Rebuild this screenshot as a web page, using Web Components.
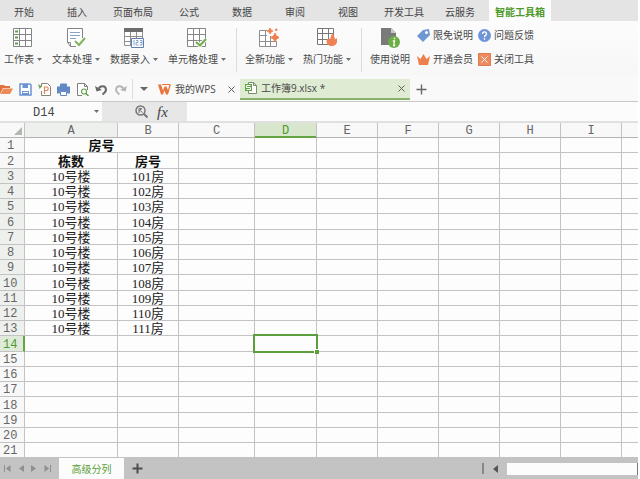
<!DOCTYPE html>
<html lang="zh-CN">
<head>
<meta charset="utf-8">
<title>工作簿9.xlsx</title>
<style>
html, body { margin: 0; height: 100%; background: #fff; }
body { font: 10px/14px "Open Sans", "Noto Sans CJK SC", sans-serif; color: #484848; }
</style>
</head>
<body>
<wps-app></wps-app>
<script>
const RESET = `
*, :host { box-sizing: border-box; }
button { font: inherit; color: inherit; background: none; border: 0; padding: 0; margin: 0; white-space: nowrap; }
input { font: inherit; color: inherit; border: 0; margin: 0; min-width: 0; }
`;

function define(name, css, html) {
  customElements.define(name, class extends HTMLElement {
    constructor() {
      super();
      this.attachShadow({ mode: 'open' }).innerHTML =
        `<style>${RESET}${css}</style>${typeof html === 'function' ? html(this) : html}`;
    }
  });
}

/* Every icon: [width, height, svg content] */
const GRID = '<path d="M.5 .5h18v18H.5z" fill="#fff" stroke="#858585"/>';
const ICONS = {
  sheet: [20, 20, '<path d="M.5 .5h18v18H.5zM6.500 .5v18M12.500 .5v18M.5 6.500h18M.5 12.500h18" fill="#fff" stroke="#858585"/><path d="M2 3.500h3M2 9.500h3M2 15.500h3" stroke="#5da04a" stroke-width="2"/>'],
  text: [20, 20, '<path d="M16.500 10V.5H1.500v14l3 4H10" fill="#fff" stroke="#858585"/><path d="M1.500 14.500h3v4" fill="none" stroke="#858585"/><path d="M4 4.500h10M4 7.500h10M4 10.500h6" stroke="#8ca3c9"/><path d="M9 13l4 4 6-7" fill="none" stroke="#80b55c" stroke-width="2"/>'],
  entry: [20, 20, '<path d="M.5 2.500h18v15H.5zM6.500 4v14M12.500 4v14M.5 8.500h18M.5 13.500h18" fill="#fff" stroke="#8f8f8f"/><path d="M0 0h19v4H0z" fill="#6d6d6d"/><path d="M7.500 10.500h12v9h-12z" fill="#fff" stroke="#5d7db4"/><path d="M9 13.500l1-1v5M12 12.500h2v2h-2v2.500h2.500M16 12.500h2v2h-2M18 14.500v2.500h-2.500" fill="none" stroke="#6f90c8" stroke-width=".8"/>'],
  cells: [20, 20, GRID + '<path d="M6.500 .5v18M12.500 .5v18M.5 6.500h18M.5 12.500h18" stroke="#858585"/><path d="M9 14l4 3.500 6-6.500" fill="none" stroke="#fff" stroke-width="4"/><path d="M9 14l4 3.500 6-6.500" fill="none" stroke="#72ad50" stroke-width="2.200"/>'],
  fresh: [20, 20, '<path d="M.5 2.500h17v16H.5zM6.500 2v16M11.500 2v16M.5 7.500h17M.5 13.500h17" fill="#fff" stroke="#8f8f8f"/><path d="M8 0h12v5h-8v3H8zM12 5h8v8h-5l-3-3z" fill="#fafafa"/><path d="M16 5l1.500 3 3 1.500-3 1.500-1.500 3-1.500-3-3-1.500 3-1.500zM11 0l1 2 2 1-2 1-1 2-1-2-2-1 2-1zM16.500 1H18v1.500h-1.500z" fill="#ef7f4d" stroke="#ef7f4d" stroke-width=".8"/>'],
  hot: [20, 20, '<path d="M.5 .5h16v16H.5zM5.500 .5v16M11.500 .5v16M.5 5.500h16M.5 11.500h16" fill="#fff" stroke="#777"/><path d="M10 11c-1.500 4 1 7 5 7s6.500-4 4.500-8l-1.500 1.500c0-3-2-4-1.500-6-3 1.500-3 4-3 6l-1.500-1.500c0 1-1 1-2 1z" fill="#ef8152"/>'],
  help: [20, 20, '<path d="M1 0h10l5 5v12H1z" fill="#7a7a7a"/><path d="M11 0v5h5z" fill="#c9c9c9"/><circle cx="14" cy="14" r="6" fill="#6aae45"/><path d="M14.500 9.800v1.500M12.800 13h1.700l-.8 4.500h1.500" fill="none" stroke="#fff" stroke-width="1.300"/>'],
  tag: [13, 13, '<path d="M6 1l6-1 1 6-7 7-6-6z" fill="#6f97d3"/><circle cx="9.500" cy="3.500" r="1.500" fill="#fff"/>'],
  crown: [13, 13, '<path d="M0 3l3.500 3L6.500 1l3 5L13 3l-2 9H2z" fill="#ee8050"/>'],
  ask: [13, 13, '<circle cx="6.500" cy="6.500" r="6.500" fill="#6f94d8"/><path d="M4.500 5c0-3 4.200-2.600 4 0-.1 1.500-2 1.300-2 3.200M6.500 9.300v1.500" fill="none" stroke="#fff" stroke-width="1.400"/>'],
  shut: [13, 13, '<path d="M.5 .5h12v12H.5z" fill="#ee8a60" stroke="#dd7a50"/><path d="M3.500 3.500l6 6M9.500 3.500l-6 6" stroke="#fff"/>'],
  folder: [13, 13, '<path d="M0 2h4l1 1h5v2H3L0 11z" fill="#e2733c"/><path d="M3.500 5.500H13L10 11H.5z" fill="#ee8a55"/>'],
  save: [13, 13, '<path d="M1 1h10l1 1v10H1z" fill="#fff" stroke="#6b93d1" stroke-width="1.500"/><path d="M3.500 1h5.500v4H3.500zM3 8h7v4H3z" fill="#6b93d1"/><path d="M4 9.500h5" stroke="#fff"/>'],
  pdf: [13, 13, '<path d="M3.500 4V.5h6l3 3v9h-9V8" fill="#fff" stroke="#8a8276"/><path d="M6.500 11V4h2.200c2 0 2 3.500 0 3.500H6.500" fill="none" stroke="#df875c" stroke-width="1.200"/><path d="M0 1l4 2.500L1.500 6" fill="#72aa52"/>'],
  print: [13, 13, '<path d="M3.500 4V1h6v3M0 4h13v6h-2.500V7.500h-8V10H0z" fill="#6188c5" stroke="#6188c5"/><path d="M3.500 8.500h6v4h-6z" fill="#fff" stroke="#6188c5"/>'],
  preview: [13, 13, '<path d="M6 12.500H1.500V.5h7l3 3V7M8.500 .5v3h3" fill="#fff" stroke="#808080"/><circle cx="8" cy="8.500" r="2.500" fill="#fff" stroke="#62a24a" stroke-width="1.200"/><path d="M10 10.500l2.500 2.500" stroke="#62a24a" stroke-width="1.500"/>'],
  undo: [13, 13, '<path d="M3.500 6C5 2.500 10.500 2 11 6.500c0 2-1.500 3.500-3.500 5" fill="none" stroke="#686868" stroke-width="2"/><path d="M0 3l1.500 5.500L7 7z" fill="#686868"/>'],
  redo: [13, 13, '<path d="M9.500 6C8 2.500 2.500 2 2 6.500c0 2 1.500 3.500 3.500 5" fill="none" stroke="#b4b4b4" stroke-width="1.800"/><path d="M13 3l-1.500 5.500L6 7z" fill="#b4b4b4"/>'],
  caret: [8, 4, '<path d="M0 0h8L4 4z" fill="#666"/>'],
  mini: [5, 3, '<path d="M0 0h5L2.500 3z" fill="#707070"/>'],
  wps: [13, 11, '<path d="M0 .5h3l2 6 1.500-4h2L10 6l1.500-5.500H13L10 10.500H8L6.500 6.500 5 10.500H3z" fill="#e9763c"/><path d="M4 .5h8" stroke="#e9763c"/>'],
  close: [7, 7, '<path d="M.5 .5l6 6M6.500 .5l-6 6" stroke="#5c5c5c"/>'],
  book: [12, 12, '<path d="M3.500 .5h5l3 3v8h-8zM8.500 .5v3h3" fill="#fff" stroke="#7c8f72"/><path d="M0 2h7v7H0z" fill="#62a247"/><path d="M5.500 3.500h-4v2h4v2h-4" fill="none" stroke="#fff"/>'],
  plus: [11, 11, '<path d="M5.500 .5v10M.5 5.500h10" stroke="#666" stroke-width="1.400"/>'],
  add: [11, 11, '<path d="M5.500 .5v10M.5 5.500h10" stroke="#4d4d4d" stroke-width="2"/>'],
  find: [13, 13, '<circle cx="5.500" cy="5.500" r="4.500" fill="none" stroke="#777" stroke-width="1.500"/><path d="M8.500 8.500l4 4" stroke="#777" stroke-width="2"/><path d="M4 8V3.500h3L4 5.500h1l2.500 2" fill="none" stroke="#777"/>'],
  corner: [8, 8, '<path d="M8 0v8H0z" fill="#b5b5b5"/>'],
  first: [7, 7, '<path d="M.5 0v7" stroke="#8f8f8f"/><path d="M6.500 0v7L2 3.500z" fill="#8f8f8f"/>'],
  prev: [5, 7, '<path d="M5 0v7L0 3.500z" fill="#8f8f8f"/>'],
  next: [5, 7, '<path d="M0 0v7l5-3.500z" fill="#8f8f8f"/>'],
  last: [7, 7, '<path d="M6.500 0v7" stroke="#8f8f8f"/><path d="M.5 0v7L5 3.500z" fill="#8f8f8f"/>'],
  scroll: [5, 8, '<path d="M5 0v8L0 4z" fill="#555"/>']
};
define('ui-icon', ':host{display:block;flex:none} svg{display:block}', el => {
  const [w, h, body] = ICONS[el.getAttribute('name')];
  return `<svg width="${w}" height="${h}" viewBox="0 0 ${w} ${h}" aria-hidden="true">${body}</svg>`;
});

define('menu-tab', `
:host { display: flex; min-width: 52px; }
button { flex: 1; padding: 2px 9px 0; }
:host([active]) { margin-left: 2px; background: #fcfcfc; }
:host([active]) button { padding: 2px 6px 0; color: #4f9a2c; font-weight: bold; }
`, '<button role="tab"><slot></slot></button>');

define('menu-bar', `
:host { display: flex; height: 21px; gap: 1px; background: #e4e4e4; color: #444; overflow: hidden; }
menu-tab:first-of-type { margin-left: -2px; }
`, ['开始', '插入', '页面布局', '公式', '数据', '审阅', '视图', '开发工具', '云服务'].map(t => `<menu-tab>${t}</menu-tab>`).join('')
  + '<menu-tab active>智能工具箱</menu-tab>');

define('ribbon-tool', `
:host { display: block; }
button { display: flex; flex-direction: column; align-items: center; gap: 4px; }
span { display: flex; align-items: center; gap: 3px; }
`, el => `<button><ui-icon name="${el.getAttribute('icon')}"></ui-icon><span><slot></slot>${el.hasAttribute('plain') ? '' : '<ui-icon name="mini"></ui-icon>'}</span></button>`);

define('ribbon-link', `
:host { display: block; }
button { display: flex; align-items: center; gap: 3px; height: 14px; }
`, el => `<button><ui-icon name="${el.getAttribute('icon')}"></ui-icon><slot></slot></button>`);

define('tool-ribbon', `
:host { display: flex; height: 54px; padding-top: 7px; background: linear-gradient(#fcfcfc, #f7f7f7); }
section { display: flex; gap: 10px; padding: 0 10px 0 8px; height: 44px; border-right: 1px solid #dcdcdc; }
section:first-of-type { padding-left: 4px; }
section:last-of-type { border: 0; gap: 7px; }
.links { display: grid; grid-template-columns: auto auto; gap: 10px 5px; align-content: start; }
`, `
<section>
<ribbon-tool icon="sheet">工作表</ribbon-tool><ribbon-tool icon="text">文本处理</ribbon-tool>
<ribbon-tool icon="entry">数据录入</ribbon-tool><ribbon-tool icon="cells">单元格处理</ribbon-tool>
</section>
<section><ribbon-tool icon="fresh">全新功能</ribbon-tool><ribbon-tool icon="hot">热门功能</ribbon-tool></section>
<section><ribbon-tool icon="help" plain>使用说明</ribbon-tool>
<div class="links">
<ribbon-link icon="tag">限免说明</ribbon-link><ribbon-link icon="ask">问题反馈</ribbon-link>
<ribbon-link icon="crown">开通会员</ribbon-link><ribbon-link icon="shut">关闭工具</ribbon-link>
</div></section>`);

define('doc-tab', `
:host { display: flex; align-items: center; gap: 4px; width: 87px; padding: 0 5px; height: 21px; }
:host([active]) { width: 170px; background: #e0ebd3; border-bottom: 2px solid #87b26c; }
.title { flex: 1; text-align: left; }
`, el => `<ui-icon name="${el.getAttribute('icon')}"></ui-icon><button class="title"><slot></slot></button><button aria-label="关闭"><ui-icon name="close"></ui-icon></button>`);

define('quick-bar', `
:host { display: flex; align-items: center; height: 27px; padding-top: 2px; background: #f9f9f9; border-bottom: 1px solid #c8c8c8; }
.tools { display: flex; align-items: center; gap: 6px; padding-right: 5px; height: 20px; border-right: 1px solid #ddd; }
.more { padding: 0 5px 0 7px; }
.new { padding-left: 6px; }
`, `<div class="tools">${[['folder', '打开'], ['save', '保存'], ['pdf', '输出为PDF'], ['print', '打印'], ['preview', '打印预览'], ['undo', '撤销'], ['redo', '恢复']]
  .map(([i, l]) => `<button aria-label="${l}"><ui-icon name="${i}"></ui-icon></button>`).join('')}</div>
<button class="more" aria-label="更多"><ui-icon name="caret"></ui-icon></button>
<doc-tab icon="wps">我的WPS</doc-tab>
<doc-tab icon="book" active>工作簿9.xlsx *</doc-tab>
<button class="new" aria-label="新建"><ui-icon name="plus"></ui-icon></button>`);

define('formula-bar', `
:host { display: flex; height: 21px; background: #e7e7e7; border-bottom: 2px solid #e0e0e0; }
.name { display: flex; align-items: center; width: 102px; background: #fcfcfc; padding-right: 3px; }
.name input { flex: 1; padding: 3px 0 0 33px; background: none; font: 12px/16px "Liberation Mono", monospace; }
.tools { display: flex; align-items: center; gap: 9px; width: 85px; padding-left: 33px; }
.fx { font: italic 15px/16px "Liberation Serif", serif; color: #444; }
.formula { flex: 1; background: #fcfcfc; }
`, `<div class="name"><input aria-label="名称框" value="D14"><button aria-label="名称列表"><ui-icon name="mini"></ui-icon></button></div>
<div class="tools"><button aria-label="查找"><ui-icon name="find"></ui-icon></button><button class="fx">fx</button></div>
<input class="formula" aria-label="编辑栏">`);

const COLS = 'ABCDEFGHI'.split('');
function sheetRow(n) {
  const rest = COLS.slice(2).map(c => n === 14 && c === 'D' ? '<td class="active"><i></i></td>' : '<td></td>').join('') + '<td></td>';
  let lead = '<td></td><td></td>';
  if (n === 1) lead = '<td colspan="2" class="b">房号</td>';
  if (n === 2) lead = '<td class="b">栋数</td><td class="b">房号</td>';
  if (n > 2 && n < 14) lead = `<td>10号楼</td><td>${98 + n}房</td>`;
  return `<tr><th scope="row" class="${n === 14 ? 'on' : n > 2 && n < 14 ? 'dim' : ''}">${n}</th>${lead}${rest}</tr>`;
}
define('sheet-grid', `
:host { display: block; flex: 1; min-height: 0; overflow: hidden; background: #fdfdfd; }
table { width: 100%; table-layout: fixed; border-collapse: separate; border-spacing: 0; }
th, td { padding: 0; height: 15px; border: solid #c3c3c3; border-width: 0 1px 1px 0; text-align: center; vertical-align: middle; }
tbody tr:nth-child(4n-2) > * { height: 16px; }
tr > :last-child { border-right: 0; }
th { padding-top: 2px; font: 12px/12px "Liberation Mono", monospace; color: #666; background: #f8f8f8; }
tbody th { padding-left: 3px; text-align: left; }
tbody tr:nth-child(-n+9) th { padding-left: 7px; }
td { padding-top: 2px; font: 13px/12px "Liberation Serif", "Noto Sans CJK SC", serif; color: #222; }
td.b { font-weight: bold; color: #111; }
thead th { border-bottom-color: #b4b4b4; }
th.dim { background: #eef0ee; }
thead th.on { background: #d7e6cc; color: #4f9a2c; border-bottom-color: #66a443; box-shadow: inset 0 -1px #66a443; }
tbody th.on { background: #dfeadb; color: #4f9a2c; border-right: 2px solid #66a443; }
thead ui-icon { margin-left: 14px; }
td.active { position: relative; }
td.active::before { content: ""; position: absolute; inset: -2px; border: 2px solid #5b9f3d; }
td.active i { position: absolute; right: -3px; bottom: -3px; width: 5px; height: 5px; background: #5b9f3d; border: solid #fff; border-width: 1px 0 0 1px; }
`, `<table aria-label="工作表"><colgroup>${[25, 93, 61, 76, 62, 61, 61, 61, 61, 61].map(w => `<col style="width:${w}px">`).join('')}<col></colgroup>
<thead><tr><th aria-label="全选"><ui-icon name="corner"></ui-icon></th>${COLS.map(c => `<th scope="col" class="${c === 'D' ? 'on' : c === 'A' ? 'dim' : ''}">${c}</th>`).join('')}<th></th></tr></thead>
<tbody>${Array.from({ length: 21 }, (_, i) => sheetRow(i + 1)).join('')}</tbody></table>`);

define('sheet-tabs', `
:host { display: flex; align-items: center; height: 21px; background: #c3c3c3; }
.nav { display: flex; align-items: center; justify-content: space-between; width: 59px; padding: 0 8px 0 4px; }
.tab { align-self: stretch; padding: 0 12px; background: #fcfcfc; color: #57a035; min-width: 65px; }
.add { padding-left: 8px; flex: 1; }
.split { width: 2px; height: 11px; background: #888; }
.left { padding: 0 9px; }
.track { width: 131px; height: 12px; background: #fcfcfc; border-right: 1px solid #777; }
`, `<div class="nav">${[['first', '第一张'], ['prev', '上一张'], ['next', '下一张'], ['last', '最后一张']].map(([i, l]) => `<button aria-label="${l}"><ui-icon name="${i}"></ui-icon></button>`).join('')}</div>
<button class="tab">高级分列</button><button class="add" aria-label="新建工作表"><ui-icon name="add"></ui-icon></button>
<div class="split"></div><button class="left" aria-label="向左滚动"><ui-icon name="scroll"></ui-icon></button><div class="track"></div>`);

define('wps-app', `
:host { display: flex; flex-direction: column; height: 100vh; padding-right: 2px; }
`, '<menu-bar></menu-bar><tool-ribbon></tool-ribbon><quick-bar></quick-bar><formula-bar></formula-bar><sheet-grid></sheet-grid><sheet-tabs></sheet-tabs>');
</script>
</body>
</html>
